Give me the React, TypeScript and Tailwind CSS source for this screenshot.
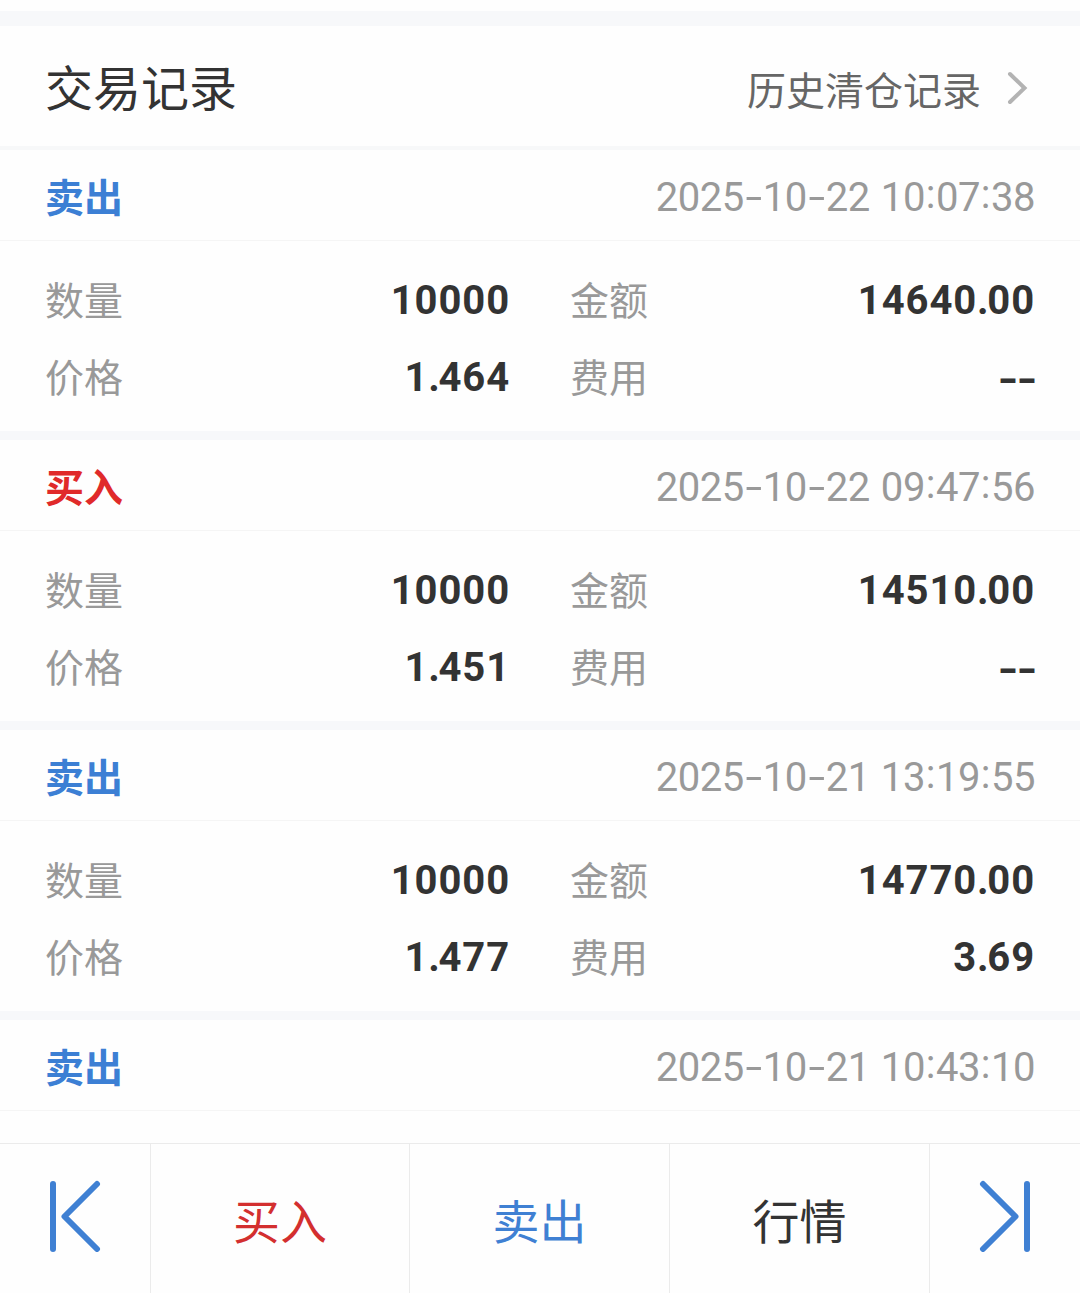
import React from 'react';
import clsx from 'clsx';

interface TradeRecord {
  side: 'buy' | 'sell';
  time: string;
  detail?: {
    quantity: string;
    amount: string;
    price: string;
    fee: string;
  };
}

const records: TradeRecord[] = [
  { side: 'sell', time: '2025-10-22 10:07:38', detail: { quantity: '10000', amount: '14640.00', price: '1.464', fee: '--' } },
  { side: 'buy', time: '2025-10-22 09:47:56', detail: { quantity: '10000', amount: '14510.00', price: '1.451', fee: '--' } },
  { side: 'sell', time: '2025-10-21 13:19:55', detail: { quantity: '10000', amount: '14770.00', price: '1.477', fee: '3.69' } },
  { side: 'sell', time: '2025-10-21 10:43:10' },
];

// Digits keep their natural width, separators get a fixed cell
const Timestamp: React.FC<{ value: string }> = ({ value }) => (
  <time className="flex whitespace-pre pt-[2px] text-[40px] leading-none tracking-[-0.46px] text-[#999999]">
    {value.split(/([-: ])/).map((part, i) => {
      if (part === '-') {
        return <span key={i} className="w-[19px] scale-x-150 text-center">-</span>;
      }
      if (part === ':' || part === ' ') {
        return <span key={i} className={clsx('w-[11px] text-center', part === ':' && '-translate-y-[3px]')}>{part}</span>;
      }
      return <span key={i}>{part}</span>;
    })}
  </time>
);

const Amount: React.FC<{ value: string }> = ({ value }) => {
  if (value === '--') {
    return (
      <span className="flex gap-[4px] text-[40px] font-bold leading-none text-[#333333]">
        <span className="w-[15px] -translate-x-px translate-y-[2px] scale-x-[1.35] text-center">-</span>
        <span className="w-[15px] -translate-x-px translate-y-[2px] scale-x-[1.35] text-center">-</span>
      </span>
    );
  }
  const [whole, decimals] = value.split('.');
  return (
    <span className="text-[40px] font-bold leading-none tracking-[0.9px] text-[#333333]">
      {whole}
      {decimals && <span className="tracking-[-1.4px]">.</span>}
      {decimals}
    </span>
  );
};

const Field: React.FC<{ label: string; value: string }> = ({ label, value }) => (
  <div className="flex h-[77px] items-center justify-between">
    <span className="pt-[3px] text-[39px] leading-none text-[#999999]">{label}</span>
    <Amount value={value} />
  </div>
);

const RecordCard: React.FC<{ record: TradeRecord }> = ({ record }) => (
  <div className="h-[290px] shrink-0 border-b-[9px] border-[#f7f8fa]">
    <div className="flex h-[91px] items-center justify-between border-b border-[#f5f5f5] px-[45px] pt-[4px]">
      <span
        className={clsx(
          'pt-[4px] text-[39px] font-bold leading-none',
          record.side === 'buy' ? 'text-[#e02a2a]' : 'text-[#3c7fd4]'
        )}
      >
        {record.side === 'buy' ? '买入' : '卖出'}
      </span>
      <Timestamp value={record.time} />
    </div>
    {record.detail && (
      <div className="grid grid-cols-[465px_465px] gap-x-[60px] pl-[45px] pt-[21px]">
        <Field label="数量" value={record.detail.quantity} />
        <Field label="金额" value={record.detail.amount} />
        <Field label="价格" value={record.detail.price} />
        <Field label="费用" value={record.detail.fee} />
      </div>
    )}
  </div>
);

const StepIcon: React.FC<{ className?: string }> = ({ className }) => (
  <svg
    className={clsx('h-[72px] w-[52px]', className)}
    viewBox="0 0 52 72"
    fill="none"
    stroke="#3f80d3"
    strokeWidth="6"
    strokeLinecap="round"
  >
    <path d="M4 4V69" />
    <path d="M48 4L15.5 36.5L48 69" strokeLinejoin="round" />
  </svg>
);

const App: React.FC = () => {
  return (
    <div className="flex h-[1293px] w-[1080px] flex-col overflow-hidden bg-[#fefefe] font-[Roboto,'Noto_Sans_CJK_SC',sans-serif]">
      <div className="mt-[11px] h-[15px] shrink-0 bg-[#f7f8fa]" />

      {/* Section header */}
      <header className="flex h-[124px] shrink-0 items-center justify-between border-b-4 border-[#f7f8f9] pl-[45px] pr-[52px] pt-[3px]">
        <h1 className="pt-[4px] text-[48px] leading-none text-[#333333]">交易记录</h1>
        <button className="flex items-center text-[39px] leading-none text-[#666666]">
          <span className="pt-[9px]">历史清仓记录</span>
          <svg className="ml-[26px] h-[34px] w-[21px]" viewBox="0 0 21 34" fill="none" stroke="#b3b3b3" strokeWidth="4" strokeLinecap="round">
            <path d="M3 3L17.5 17L3 31" strokeLinejoin="miter" />
          </svg>
        </button>
      </header>

      {/* Trade list, the last card runs under the bottom bar */}
      <main className="flex min-h-0 flex-1 flex-col overflow-hidden">
        {records.map((record) => (
          <RecordCard key={record.time} record={record} />
        ))}
      </main>

      <footer className="grid h-[150px] shrink-0 grid-cols-[151px_259px_260px_260px_150px] border-t border-[#ebebeb] text-[47px] leading-none">
        <button className="flex items-center justify-center border-r border-[#ebebeb]">
          <StepIcon className="-translate-y-[3px]" />
        </button>
        <button className="border-r border-[#ebebeb] pt-[7px] text-[#d32f2f]">买入</button>
        <button className="border-r border-[#ebebeb] pt-[7px] text-[#3f80d3]">卖出</button>
        <button className="border-r border-[#ebebeb] pt-[7px] text-[#333333]">行情</button>
        <button className="flex items-center justify-center">
          <StepIcon className="-translate-y-[3px] -scale-x-100" />
        </button>
      </footer>
    </div>
  );
};

export default App;
